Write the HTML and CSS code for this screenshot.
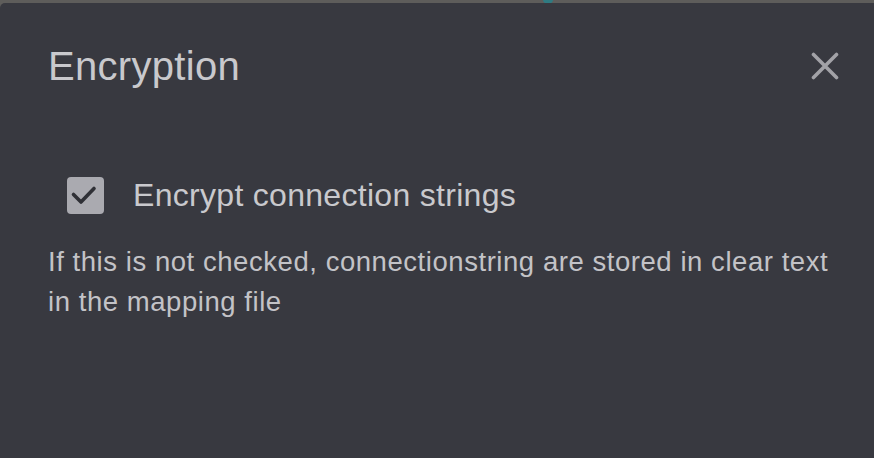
FILE: index.html
```html
<!DOCTYPE html>
<html lang="en">
<head>
<meta charset="utf-8">
<title>Encryption</title>
<link rel="stylesheet" href="styles.css">
</head>
<body>
<div class="backdrop">
  <div class="backdrop-accent"></div>
  <section class="dialog">
    <header class="dialog-header">
      <h1 class="dialog-title">Encryption</h1>
      <button class="close-btn" aria-label="Close">
        <svg viewBox="0 0 28 28" width="28" height="28"><path d="M2.5 2.5 L25.5 25.5 M25.5 2.5 L2.5 25.5" stroke="#a2a2a7" stroke-width="3.6" stroke-linecap="round" fill="none"/></svg>
      </button>
    </header>
    <div class="dialog-body">
      <label class="check-row">
        <span class="checkbox">
          <svg viewBox="0 0 37 37" width="37" height="37"><path d="M6.5 17.5 L14 25 L27 11.5" stroke="#2f3036" stroke-width="3.6" stroke-linecap="round" stroke-linejoin="round" fill="none"/></svg>
        </span>
        <span class="check-label">Encrypt connection strings</span>
      </label>
      <p class="description">If this is not checked, connectionstring are stored in clear text in the mapping file</p>
    </div>
  </section>
</div>
</body>
</html>
```

FILE: styles.css
```css
* { box-sizing: border-box; }
html, body { margin: 0; padding: 0; }
body {
  width: 874px;
  height: 458px;
  overflow: hidden;
  background: #5e5d5b;
  font-family: "Liberation Sans", Arial, sans-serif;
}
.backdrop {
  position: relative;
  width: 874px;
  height: 458px;
  padding-top: 3px;
}
.backdrop-accent {
  position: absolute;
  left: 543px;
  top: -4px;
  width: 10px;
  height: 8px;
  border-radius: 50%;
  background: #2f7b82;
}
.dialog {
  position: relative;
  height: 455px;
  margin-right: -10px;
  background: #383940;
  border-top-left-radius: 5px;
  padding: 0 45px 0 48px;
}
.dialog-header {
  display: flex;
  align-items: center;
  justify-content: space-between;
  height: 130px;
}
.dialog-title {
  margin: 0;
  margin-top: -4px;
  font-size: 40px;
  letter-spacing: 0.3px;
  font-weight: 400;
  color: #c9c9cd;
  line-height: 1;
}
.close-btn {
  background: none;
  border: 0;
  padding: 0;
  margin-top: -4px;
  width: 28px;
  height: 28px;
  display: flex;
}
.dialog-body {
  padding-top: 44px;
}
.check-row {
  display: flex;
  align-items: center;
  gap: 29px;
  padding-left: 19px;
}
.checkbox {
  width: 37px;
  height: 37px;
  border-radius: 4px;
  background: #aaaab0;
  display: flex;
}
.check-label {
  font-size: 32px;
  letter-spacing: 0.3px;
  color: #c9c9cd;
}
.description {
  margin: 28px 0 0 0;
  font-size: 27.5px;
  letter-spacing: 0.55px;
  line-height: 40px;
  color: #c3c3c7;
  max-width: 800px;
}
```
